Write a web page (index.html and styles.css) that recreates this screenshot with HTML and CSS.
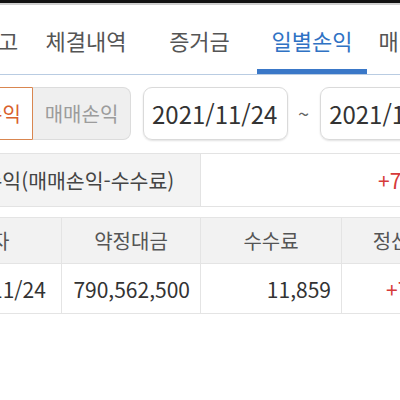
FILE: index.html
```html
<!DOCTYPE html>
<html lang="ko">
<head>
<meta charset="utf-8">
<link rel="stylesheet" href="styles.css">
</head>
<body>
<div class="statusbar"></div>
<nav class="tabs">
  <div class="tabs-inner">
    <div class="tab">잔고</div>
    <div class="tab">체결내역</div>
    <div class="tab">증거금</div>
    <div class="tab active">일별손익</div>
    <div class="tab">매매내역</div>
  </div>
</nav>
<div class="filters">
  <div class="seg">
    <button class="seg-btn on">정산손익</button>
    <button class="seg-btn off">매매손익</button>
  </div>
  <div class="date">2021/11/24</div>
  <span class="tilde">~</span>
  <div class="date">2021/11/24</div>
</div>
<div class="summary">
  <div class="sum-label">정산손익(매매손익-수수료)</div>
  <div class="sum-value">+790,550,641</div>
</div>
<table class="grid">
  <thead>
    <tr><th>일자</th><th>약정대금</th><th>수수료</th><th>정산손익</th></tr>
  </thead>
  <tbody>
    <tr><td class="c">2021/11/24</td><td>790,562,500</td><td>11,859</td><td class="plus">+790,550,641</td></tr>
  </tbody>
</table>
</body>
</html>
```
FILE: styles.css
```css
html, body {
  margin: 0;
  padding: 0;
  background: #fff;
}
body {
  width: 400px;
  height: 400px;
  overflow: hidden;
  font-family: "Noto Sans CJK KR", "Noto Sans", sans-serif;
  color: #333;
}
.statusbar {
  height: 3px;
  background: #111;
  border-bottom: 2px solid #cfcfcf;
}
.tabs {
  border-bottom: 1px solid #b9cce2;
}
.tabs-inner {
  display: grid;
  grid-template-columns: 64px 112px 115px 110px 104px;
  margin-left: -34px;
  height: 69px;
}
.tab {
  display: flex;
  align-items: center;
  justify-content: center;
  white-space: nowrap;
  font-size: 22px;
  color: #555;
  box-sizing: border-box;
  border-bottom: 5px solid transparent;
  padding-top: 6px;
}
.tab.active {
  color: #2f72c4;
  border-bottom-color: #3a78c8;
}
.filters {
  display: flex;
  align-items: center;
  margin: 12px 0 0 -65px;
  height: 53px;
  white-space: nowrap;
}
.seg {
  display: flex;
  height: 53px;
  margin-right: 12px;
}
.seg-btn {
  font-family: inherit;
  font-size: 20px;
  padding: 0 8px;
  width: 98px;
  height: 53px;
  box-sizing: border-box;
  cursor: pointer;
}
.seg-btn.on {
  background: #fff;
  border: 1px solid #d98650;
  color: #d9602d;
  border-radius: 8px 0 0 8px;
}
.seg-btn.off {
  background: #efefef;
  border: 1px solid #dcdcdc;
  border-left: none;
  color: #9c9c9c;
  border-radius: 0 8px 8px 0;
}
.date {
  flex: none;
  width: 145px;
  height: 53px;
  box-sizing: border-box;
  border: 1px solid #dadada;
  border-radius: 9px;
  box-shadow: 0 1px 2px rgba(0, 0, 0, 0.12);
  display: flex;
  align-items: center;
  padding-left: 8px;
  font-size: 24px;
  color: #333;
}
.tilde {
  margin: 0 11px 0 10px;
  font-size: 20px;
  color: #666;
}
.summary {
  display: flex;
  margin: 13px 0 0 -80px;
  height: 52px;
  border-top: 1px solid #e3e3e3;
  border-bottom: 1px solid #e3e3e3;
}
.sum-label {
  flex: none;
  width: 280px;
  background: #f3f3f3;
  border-right: 1px solid #e3e3e3;
  display: flex;
  align-items: center;
  justify-content: center;
  white-space: nowrap;
  font-size: 20.5px;
  color: #444;
}
.sum-value {
  flex: 1;
  display: flex;
  align-items: center;
  padding-left: 177px;
  white-space: nowrap;
  overflow: hidden;
  font-size: 21px;
  color: #d63a3a;
}
.grid {
  margin: 10px 0 0 -80px;
  border-collapse: collapse;
  table-layout: fixed;
  width: 558px;
}
.grid th, .grid td {
  border: 1px solid #e4e4e4;
  white-space: nowrap;
  overflow: hidden;
}
.grid th:nth-child(1), .grid td:nth-child(1) { width: 140px; }
.grid th:nth-child(2), .grid td:nth-child(2) { width: 138px; }
.grid th:nth-child(3), .grid td:nth-child(3) { width: 140px; }
.grid th {
  height: 45px;
  background: #f2f2f2;
  font-weight: normal;
  font-size: 20px;
  color: #555;
  text-align: center;
  padding: 0;
}
.grid td {
  height: 49px;
  font-size: 21px;
  color: #333;
  text-align: right;
  padding: 0 10px 0 0;
}
.grid td.c {
  text-align: center;
  padding: 0;
}
.grid td.plus {
  text-align: left;
  padding-left: 44px;
  color: #d63a3a;
}
```
